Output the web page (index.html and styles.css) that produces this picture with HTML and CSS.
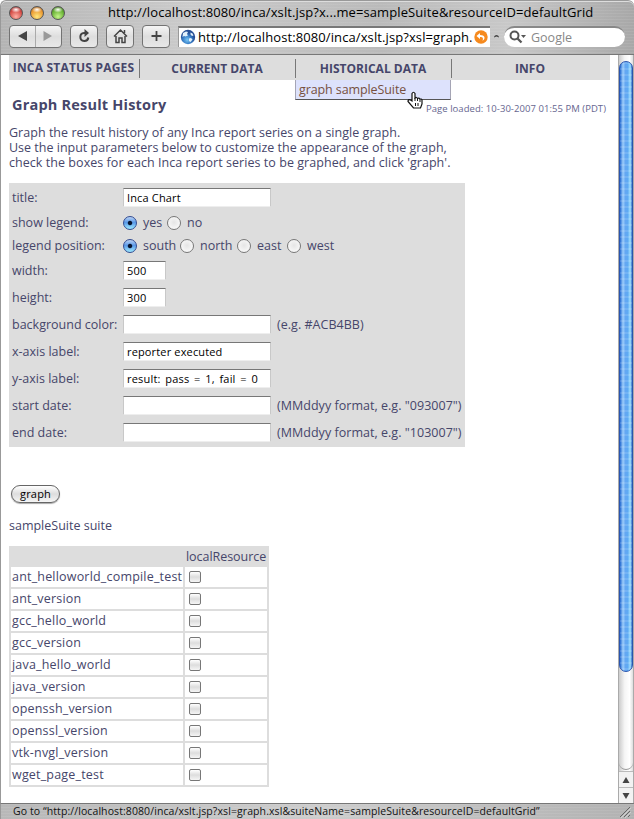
FILE: index.html
```html
<!DOCTYPE html>
<html lang="en">
<head>
<meta charset="utf-8">
<title>Graph Result History</title>
<link rel="stylesheet" href="styles.css">
</head>
<body>
<div class="window">
  <header class="chrome">
    <div class="titlebar">
      <div class="lights"><i class="light red"></i><i class="light amber"></i><i class="light green"></i></div>
      <div class="window-title">http://localhost:8080/inca/xslt.jsp?x...me=sampleSuite&amp;resourceID=defaultGrid</div>
    </div>
    <div class="toolbar">
      <div class="tool history">
        <svg width="53" height="22" viewBox="0 0 53 22"><path d="M26.5 0v22" stroke="#aaa"/><path d="M9 11l9-5v10z" fill="#444"/><path d="M43 11l-8.500-5v10z" fill="#999"/></svg>
      </div>
      <div class="tool reload"><svg width="27" height="22" viewBox="0 0 27 22"><path d="M14.500 8H13a4 4 0 1 0 4.300 4.500" fill="none" stroke="#444" stroke-width="2"/><path d="M13.500 4l4.500 4-4.500 4z" fill="#444"/></svg></div>
      <div class="tool home"><svg width="27" height="22" viewBox="0 0 27 22"><path d="M7 11.500l6.500-6.500 6.500 6.500M17.500 8V5M9 11v6.500h3V13h3v4.500h3V11" fill="none" stroke="#444" stroke-width="1.500"/></svg></div>
      <div class="tool add"><svg width="27" height="22" viewBox="0 0 27 22"><path d="M13.500 6v10M8.500 11h10" stroke="#444" stroke-width="1.800"/></svg></div>
      <div class="address">
        <svg width="16" height="16" viewBox="0 0 16 16"><defs><radialGradient id="globe" cx=".45" cy=".7"><stop offset="0" stop-color="#79c6f5"/><stop offset=".6" stop-color="#397fc8"/><stop offset="1" stop-color="#264f96"/></radialGradient></defs><circle cx="8" cy="8" r="7.200" fill="url(#globe)"/><path d="M3 4l3-1.500 2 .5-1 2 1 1.500-2.500 1-1.500-.5L2.500 8zM10.500 3.500l2 1 1 2-1.500.5-1.500-1.500zM9 9.500l2-.5 1.500 1.500-2 2.500L9 12z" fill="#e2f1fb"/></svg>
        <span class="url">http://localhost:8080/inca/xslt.jsp?xsl=graph.</span>
        <svg class="snapback" width="14" height="14" viewBox="0 0 14 14"><circle cx="7" cy="7" r="6.700" fill="#f68a1e"/><path d="M6 3L2.500 6 6 9V7c3-.3 3.500 1.500 2.500 3.800C12 8.500 11 5 6 5z" fill="#fff"/></svg>
      </div>
      <svg class="caret" width="5" height="4" viewBox="0 0 5 4"><path d="M0 3.500C0 0 5 0 5 3.500L2.500 2.500z" fill="#444"/></svg>
      <div class="search"><svg width="20" height="16" viewBox="0 0 20 16"><circle cx="6.500" cy="6.500" r="4" fill="none" stroke="#555" stroke-width="2"/><path d="M9.500 9.500l4 4" stroke="#555" stroke-width="2.300"/><path d="M13 6h5l-2.500 3z" fill="#555"/></svg><span>Google</span></div>
    </div>
  </header>

  <div class="viewport">
    <main class="page">
      <nav class="menu">
        <div class="menu-item brand"><span>INCA STATUS PAGES</span></div>
        <div class="menu-item"><span>CURRENT DATA</span></div>
        <div class="menu-item"><span>HISTORICAL DATA</span>
          <div class="submenu"><span>graph sampleSuite</span>
            <svg class="pointer" width="17" height="18" viewBox="0 0 17 18"><path d="M5 10V2.500Q6.500 0 8 2.500V7q1.500-1.300 2.500.5 1.500-1 2.500.7 1.500-.7 2 .8v4l-1.500 4H6.500L1 10.500Q1 8 3.500 9z" fill="#fff" stroke="#111" stroke-width="1.200"/><path d="M8 7v3M10.500 7.500V10M13 8.500V11M8.500 12v3M11 12v3" stroke="#111"/></svg>
          </div>
        </div>
        <div class="menu-item"><span>INFO</span></div>
      </nav>

      <div class="heading"><h1>Graph Result History</h1><p class="loaded">Page loaded: 10-30-2007 01:55 PM (PDT)</p></div>

      <p class="intro"><span class="l1">Graph the result history of any Inca report series on a single graph.</span><br><span>Use the input parameters below to customize the appearance of the graph,</span><br><span class="l3">check the boxes for each Inca report series to be graphed, and click 'graph'.</span></p>

      <form class="params">
        <div class="row"><label>title:</label><div class="field">Inca Chart</div></div>
        <div class="row short"><label>show legend:</label><i class="radio on"></i><span class="opt w-yes">yes</span><i class="radio"></i><span class="opt">no</span></div>
        <div class="row short"><label>legend position:</label><i class="radio on"></i><span class="opt w-south">south</span><i class="radio"></i><span class="opt w-north">north</span><i class="radio"></i><span class="opt w-east">east</span><i class="radio"></i><span class="opt">west</span></div>
        <div class="row"><label>width:</label><div class="field small">500</div></div>
        <div class="row"><label>height:</label><div class="field small">300</div></div>
        <div class="row"><label>background color:</label><div class="field"></div><span class="hint">(e.g. #ACB4BB)</span></div>
        <div class="row"><label>x-axis label:</label><div class="field">reporter executed</div></div>
        <div class="row"><label>y-axis label:</label><div class="field formula">result: pass = 1, fail = 0</div></div>
        <div class="row"><label>start date:</label><div class="field"></div><span class="hint">(MMddyy format, e.g. "093007")</span></div>
        <div class="row"><label>end date:</label><div class="field"></div><span class="hint">(MMddyy format, e.g. "103007")</span></div>
      </form>

      <div class="submit">graph</div>
      <p class="suite">sampleSuite suite</p>

      <div class="results">
        <div class="head"></div><div class="head">localResource</div>
        <div class="cell">ant_helloworld_compile_test</div><div class="cell"><i class="check"></i></div>
        <div class="cell">ant_version</div><div class="cell"><i class="check"></i></div>
        <div class="cell">gcc_hello_world</div><div class="cell"><i class="check"></i></div>
        <div class="cell">gcc_version</div><div class="cell"><i class="check"></i></div>
        <div class="cell">java_hello_world</div><div class="cell"><i class="check"></i></div>
        <div class="cell">java_version</div><div class="cell"><i class="check"></i></div>
        <div class="cell">openssh_version</div><div class="cell"><i class="check"></i></div>
        <div class="cell">openssl_version</div><div class="cell"><i class="check"></i></div>
        <div class="cell">vtk-nvgl_version</div><div class="cell"><i class="check"></i></div>
        <div class="cell">wget_page_test</div><div class="cell"><i class="check"></i></div>
      </div>
    </main>
    <aside class="scrollbar">
      <div class="thumb"></div>
      <div class="track"></div>
      <div class="arrow"><svg width="8" height="6" viewBox="0 0 8 6"><path d="M4 0l3.500 6h-7z" fill="#444"/></svg></div>
      <div class="arrow"><svg width="8" height="6" viewBox="0 0 8 6"><path d="M4 6L.5 0h7z" fill="#444"/></svg></div>
    </aside>
  </div>

  <footer class="status"><span>Go to “http://localhost:8080/inca/xslt.jsp?xsl=graph.xsl&amp;suiteName=sampleSuite&amp;resourceID=defaultGrid”</span>
    <svg width="12" height="12" viewBox="0 0 12 12"><path d="M1 11L11 1M5 11l6-6M9 11l2-2" stroke="#666"/><path d="M2 12L12 2M6 12l6-6" stroke="#ddd" stroke-width=".7"/></svg>
  </footer>
</div>
</body>
</html>
```

FILE: styles.css
```css
* { box-sizing: border-box; }
body { margin: 0; background: #fff; font: 12.5px/15px "Open Sans", "Noto Sans", sans-serif; color: #46466a; }
h1, p { margin: 0; }
i { display: block; flex: none; }
svg { display: block; flex: none; }
.window { width: 634px; height: 819px; display: flex; flex-direction: column; overflow: hidden; white-space: nowrap; }

.chrome { flex: none; height: 55px; border-bottom: 1px solid #777; border-top: 1px solid #999; border-left: 1px solid #999; border-radius: 6px 6px 0 0;
  background: repeating-linear-gradient(rgba(255,255,255,.07) 0 1px, transparent 1px 3px), linear-gradient(90deg, #b4b4b4, #cbcbcb 30%, #bababa 60%, #c8c8c8 80%, #a8a8a8); box-shadow: inset 0 1px #ddd; }
.titlebar { height: 23px; display: flex; align-items: center; padding-left: 8px; }
.lights { display: flex; gap: 7px; width: 99px; flex: none; }
.light { width: 14px; height: 14px; border-radius: 50%; border: 1px solid #555; }
.red { background: radial-gradient(ellipse 5px 3px at 50% 22%, #fff, transparent), radial-gradient(circle at 50% 80%, #ffb0a4, #d44a44 60%, #852525); }
.amber { background: radial-gradient(ellipse 5px 3px at 50% 22%, #fff, transparent), radial-gradient(circle at 50% 80%, #ffe87e, #eb9830 60%, #8d4d10); }
.green { background: radial-gradient(ellipse 5px 3px at 50% 22%, #fff, transparent), radial-gradient(circle at 50% 80%, #c4f589, #66b033 60%, #2b6212); }
.window-title { font-size: 13px; color: #000; letter-spacing: .1px; }
.toolbar { height: 24px; display: flex; align-items: center; padding-left: 8px; }
.tool { height: 23px; width: 28px; margin-right: 8px; border: 1px solid #737373; border-radius: 4px; background: linear-gradient(#f5f5f5, #dedede 50%, #e8e8e8); display: flex; align-items: center; justify-content: center; overflow: hidden; flex: none; }
.history { width: 53px; }
.address { width: 312px; height: 21px; background: #fff; border-top: 2px solid #777; border-left: 1px solid #999; display: flex; align-items: center; padding-left: 1px; flex: none; }
.url { font-size: 13px; color: #000; letter-spacing: .1px; width: 276px; margin-left: 2px; flex: none; }
.caret { margin: 0 5px 0 4px; }
.search { width: 121px; height: 21px; border-radius: 11px; background: #fff; border-top: 2px solid #888; display: flex; align-items: center; padding-left: 4px; gap: 3px; color: #888; font-size: 12.5px; flex: none; }

.viewport { height: 748px; display: flex; flex: none; border-left: 1px solid #999; }
.page { width: 617px; padding-left: 8px; background: #fff; flex: none; }
.menu { display: grid; grid-template-columns: 131px 156px 156px 158px; width: 601px; height: 25px; background: #ddd; font-weight: bold; font-size: 12px; }
.menu-item { position: relative; display: flex; justify-content: center; padding: 6px 2px 0 0; }
.menu-item:not(:last-child)::after { content: ""; position: absolute; right: 0; top: 4px; width: 1px; height: 19px; background: #777; }
.menu .brand { padding-top: 5px; letter-spacing: .2px; }
.submenu { position: absolute; left: -1px; top: 25px; width: 156px; height: 20px; padding: 2px 0 0 3px; background: #dde2fc; border: 1px solid #a5a5b5; border-bottom-color: #555; border-top: 0; font-weight: normal; font-size: 12.5px; letter-spacing: -.1px; color: #76503f; }
.pointer { position: absolute; left: 111px; top: 11px; }
.heading { height: 45px; display: flex; justify-content: space-between; padding: 16px 12px 0 3px; }
h1 { font-size: 14.5px; line-height: 18px; letter-spacing: .2px; }
.loaded { font-size: 9.5px; line-height: 12px; letter-spacing: .05px; color: #66668f; padding-top: 7px; }
.intro { height: 58px; line-height: 15px; }
.l1 { letter-spacing: .03px; }
.l3 { letter-spacing: .05px; }
.params { width: 456px; height: 264px; background: #ddd; padding: 1px 0 0 3px; }
.row { height: 27px; display: flex; align-items: center; }
.short { height: 23px; }
label { width: 111px; flex: none; }
.field { width: 148px; height: 19px; background: #fff; color: #000; border: 1px solid #c8c8c8; border-top: 1px solid #777; border-bottom-color: #eee; font-size: 11px; line-height: 17px; letter-spacing: .15px; padding-left: 3px; }
.formula { letter-spacing: .2px; word-spacing: 1.6px; }
.small { width: 43px; }
.hint { margin-left: 6px; letter-spacing: .03px; }
.radio { width: 14px; height: 14px; border-radius: 50%; border: 1px solid #777; background: radial-gradient(circle at 50% 45%, #e5e5e5, #fff); }
.on { border-color: #334c91; background: radial-gradient(circle, #071530 0 1.700px, transparent 2.700px), linear-gradient(#bcd3f4, #5a99e8 45%, #9deaff); }
.opt { margin-left: 6px; }
.w-yes { width: 24px; }
.w-south { width: 37px; }
.w-north { width: 37px; }
.w-east { width: 30px; }
.submit { width: 49px; height: 18px; margin: 38px 0 0 2px; border: 1px solid #666; border-radius: 9px; background: linear-gradient(#fff, #ddd 50%, #f5f5f5); box-shadow: 0 1px 1px #aaa; color: #000; font-size: 11px; line-height: 16px; letter-spacing: .2px; text-align: center; }
.suite { margin: 15px 0 13px; }
.results { width: 260px; display: grid; grid-template-columns: 172px 82px; grid-template-rows: 19px; grid-auto-rows: 20px; gap: 2px; padding: 0 2px 2px; background: #ddd; }
.head, .cell { display: flex; align-items: center; padding-left: 1px; overflow: hidden; }
.head { padding-top: 2px; letter-spacing: -.05px; }
.cell { background: #fff; letter-spacing: .19px; padding-bottom: 1px; }
.check { width: 12px; height: 12px; margin: 1px 0 0 3px; border: 1px solid #777; border-radius: 2px; background: linear-gradient(#fff, #ddd 50%, #f5f5f5); }

.scrollbar { width: 16px; height: 748px; border: 1px solid #aaa; border-top: 0; border-bottom: 0; display: flex; flex-direction: column; background: linear-gradient(90deg, #ccc, #f5f5f5 40%, #fff 75%, #ddd); }
.thumb { height: 611px; margin-top: 6px; border: 1px solid #2a55ae; border-radius: 7px; flex: none;
  background: repeating-linear-gradient(rgba(255,255,255,.12) 0 2px, transparent 2px 6px), linear-gradient(90deg, #2167cf, #9ccdfb 25%, #64a7f2 45%, #5eaaf3 65%, #a2e0ff 85%, #3777c8); }
.track { flex: 1; border-radius: 0 0 7px 7px; border-bottom: 1px solid #999; margin-bottom: 1px; }
.arrow { height: 16px; flex: none; display: flex; align-items: center; justify-content: center; border-top: 1px solid #bbb; background: #f2f2f2; }
.status { height: 16px; flex: none; border-top: 1px solid #777; border-left: 1px solid #999; padding: 0 3px 0 12px; display: flex; align-items: center; justify-content: space-between; color: #111; font-size: 10.5px; letter-spacing: .09px; background: repeating-linear-gradient(rgba(255,255,255,.07) 0 1px, transparent 1px 3px), linear-gradient(90deg, #b8b8b8, #cdcdcd 50%, #b2b2b2); }
```
